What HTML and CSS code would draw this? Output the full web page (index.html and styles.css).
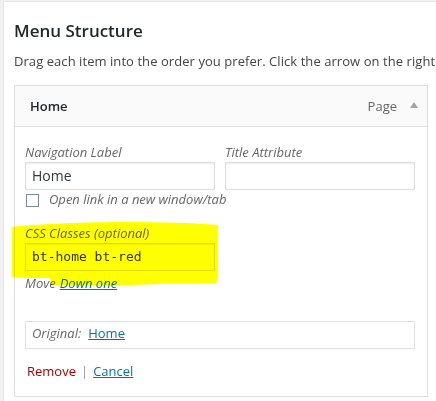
FILE: index.html
```html
<!DOCTYPE html>
<html>
<head>
<meta charset="utf-8">
<link rel="stylesheet" href="styles.css">
</head>
<body>
<div class="panel">
  <h3 class="title">Menu Structure</h3>
  <p class="desc">Drag each item into the order you prefer. Click the arrow on the right of the item to reveal additional configuration options.</p>
  <div class="item">
    <div class="handle">
      <span class="item-title">Home</span>
      <span class="item-controls"><span class="item-type">Page</span><span class="arrow"></span></span>
    </div>
    <div class="settings">
      <div class="row">
        <label class="field">
          <span class="label">Navigation Label</span>
          <span class="input">Home</span>
        </label>
        <label class="field">
          <span class="label">Title Attribute</span>
          <span class="input"></span>
        </label>
      </div>
      <div class="check">
        <span class="box"></span>
        <span class="check-text">Open link in a new window/tab</span>
      </div>
      <label class="field wide">
        <span class="label">CSS Classes (optional)</span>
        <span class="input mono">bt-home bt-red</span>
      </label>
      <div class="move"><span class="move-label">Move</span><a class="link italic" href="#">Down one</a></div>
      <div class="original"><span class="orig-label">Original:</span><a class="link" href="#">Home</a></div>
      <div class="actions"><a class="remove" href="#">Remove</a><span class="sep">|</span><a class="link cancel" href="#">Cancel</a></div>
    </div>
  </div>
</div>
<svg class="highlight" width="436" height="401" viewBox="0 0 436 401">
  <path d="M12,227 C60,222 150,220 218,225 L218,276 L216,283 C190,284 170,283 158,284 C120,286 85,285 51,285 L50,278 C35,278 22,278 12,277 Z" fill="#ffff00"/>
</svg>
</body>
</html>
```

FILE: styles.css
```css
html, body {
  margin: 0;
  padding: 0;
}
body {
  background: #f1f1f1;
  width: 436px;
  height: 401px;
  overflow: hidden;
  position: relative;
  font-family: "Open Sans", "Noto Sans", sans-serif;
  color: #444;
}
.panel {
  box-sizing: border-box;
  margin: 1px 0 0 3px;
  background: #fff;
  border-left: 1px solid #e5e5e5;
  border-top: 1px solid #e5e5e5;
  height: 400px;
  overflow: hidden;
  padding: 0 0 0 10px;
}
.title {
  margin: 0;
  padding-top: 19px;
  font-size: 17px;
  line-height: 20px;
  font-weight: 600;
  color: #23282d;
}
.desc {
  margin: 0;
  padding-top: 11px;
  font-size: 13px;
  line-height: 18px;
  white-space: nowrap;
  overflow: hidden;
  letter-spacing: 0.06px;
  color: #444;
}
.item {
  margin-top: 15px;
  width: 414px;
}
.handle {
  display: flex;
  justify-content: space-between;
  align-items: center;
  border: 1px solid #dfdfdf;
  background: #fafafa;
  padding: 10px 9px 10px 15px;
  height: 20px;
}
.item-title {
  font-size: 13px;
  font-weight: 600;
  color: #23282d;
}
.item-controls {
  display: flex;
  align-items: center;
}
.item-type {
  font-size: 13px;
  color: #666;
}
.arrow {
  margin-left: 13px;
  width: 0;
  height: 0;
  border-left: 4px solid transparent;
  border-right: 4px solid transparent;
  border-bottom: 6px solid #a0a5aa;
  margin-top: -2px;
}
.settings {
  border: 1px solid #dfdfdf;
  border-top: none;
  padding: 16px 12px 15px 10px;
}
.row {
  display: flex;
  gap: 10px;
}
.field {
  display: flex;
  flex-direction: column;
  width: 190px;
}
.label {
  font-size: 13px;
  line-height: 19px;
  font-style: italic;
  color: #666;
}
.input {
  box-sizing: border-box;
  height: 28px;
  border: 1px solid #ddd;
  box-shadow: inset 0 1px 2px rgba(0,0,0,0.07);
  background: #fff;
  padding: 0 6px;
  font-size: 14px;
  line-height: 26px;
  color: #32373c;
}
.mono {
  font-family: "DejaVu Sans Mono", "Liberation Mono", monospace;
  font-size: 13px;
  color: #32373c;
}
.check {
  display: flex;
  align-items: flex-start;
  margin-top: 3px;
  padding-left: 1px;
}
.box {
  box-sizing: border-box;
  width: 13px;
  height: 13px;
  border: 1px solid #7e8993;
  background: #fff;
  margin-top: 1px;
}
.check-text {
  margin-left: 10px;
  font-size: 13px;
  line-height: 13px;
  font-style: italic;
  color: #666;
}
.wide {
  margin-top: 17px;
}
.move {
  margin-top: 3px;
  font-size: 13px;
  line-height: 19px;
}
.move-label {
  font-style: italic;
  color: #666;
  margin-right: 4px;
}
.link {
  color: #0073aa;
  text-decoration: underline;
}
.italic {
  font-style: italic;
}
.original {
  margin-top: 28px;
  box-sizing: border-box;
  height: 28px;
  border: 1px solid #e1e1e1;
  padding: 1px 6px 0;
  font-size: 13px;
  line-height: 20px;
}
.orig-label {
  font-style: italic;
  color: #666;
  margin-right: 7px;
}
.actions {
  margin-top: 13px;
  font-size: 13px;
  line-height: 19px;
  padding-left: 2px;
}
.remove {
  color: #a00;
  text-decoration: none;
}
.sep {
  color: #999;
  margin: 0 3px 0 5px;
}
.cancel {
  padding: 0 2px;
}
.highlight {
  position: absolute;
  left: 0;
  top: 0;
  pointer-events: none;
  mix-blend-mode: multiply;
}
```
